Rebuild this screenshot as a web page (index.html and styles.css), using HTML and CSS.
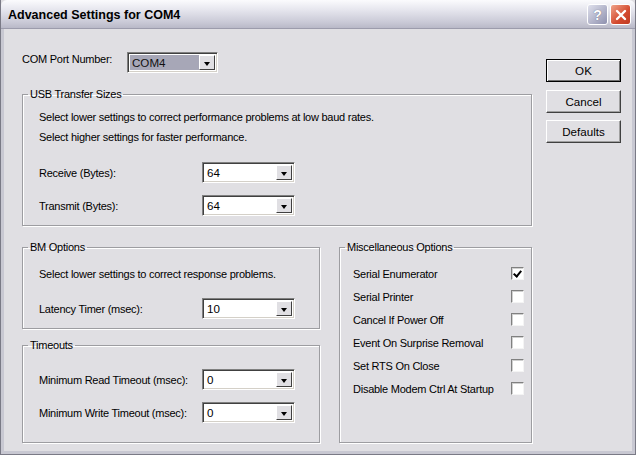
FILE: index.html
```html
<!DOCTYPE html>
<html lang="en">
<head>
  <meta charset="UTF-8" />
  <title>Advanced Settings for COM4</title>
  <link rel="stylesheet" href="styles.css">
</head>
<body>
  <div class="window">
    <div class="titlebar">
      <span class="title">Advanced Settings for COM4</span>
      <div class="caption-btns">
        <span class="cap-btn help">?</span>
        <span class="cap-btn close">
          <svg width="12" height="12" viewBox="0 0 12 12"><path d="M2 2 L10 10 M10 2 L2 10" stroke="#fff" stroke-width="2.4" stroke-linecap="round"/></svg>
        </span>
      </div>
    </div>

    <div class="client">
      <div class="main">
        <div class="port-row">
          <span class="port-label">COM Port Number:</span>
          <div class="combo port-combo">
            <span class="value selected">COM4</span>
            <span class="arrow"></span>
          </div>
        </div>

        <fieldset class="group usb">
          <legend>USB Transfer Sizes</legend>
          <p class="note">Select lower settings to correct performance problems at low baud rates.</p>
          <p class="note">Select higher settings for faster performance.</p>
          <div class="field first">
            <span>Receive (Bytes):</span>
            <div class="combo"><span class="value">64</span><span class="arrow"></span></div>
          </div>
          <div class="field">
            <span>Transmit (Bytes):</span>
            <div class="combo"><span class="value">64</span><span class="arrow"></span></div>
          </div>
        </fieldset>

        <div class="lower">
          <div class="left-col">
            <fieldset class="group bm">
              <legend>BM Options</legend>
              <p class="note">Select lower settings to correct response problems.</p>
              <div class="field first">
                <span>Latency Timer (msec):</span>
                <div class="combo"><span class="value">10</span><span class="arrow"></span></div>
              </div>
            </fieldset>

            <fieldset class="group timeouts">
              <legend>Timeouts</legend>
              <div class="field">
                <span>Minimum Read Timeout (msec):</span>
                <div class="combo"><span class="value">0</span><span class="arrow"></span></div>
              </div>
              <div class="field">
                <span>Minimum Write Timeout (msec):</span>
                <div class="combo"><span class="value">0</span><span class="arrow"></span></div>
              </div>
            </fieldset>
          </div>

          <fieldset class="group misc">
            <legend>Miscellaneous Options</legend>
            <div class="check-row"><span>Serial Enumerator</span><span class="check checked"></span></div>
            <div class="check-row"><span>Serial Printer</span><span class="check"></span></div>
            <div class="check-row"><span>Cancel If Power Off</span><span class="check"></span></div>
            <div class="check-row"><span>Event On Surprise Removal</span><span class="check"></span></div>
            <div class="check-row"><span>Set RTS On Close</span><span class="check"></span></div>
            <div class="check-row"><span>Disable Modem Ctrl At Startup</span><span class="check"></span></div>
          </fieldset>
        </div>
      </div>

      <div class="side">
        <button class="btn default">OK</button>
        <button class="btn">Cancel</button>
        <button class="btn">Defaults</button>
      </div>
    </div>
  </div>
</body>
</html>
```

FILE: styles.css
```css
:root {
  --face: #e0dfe3;
  --edge-dark: #9d9da1;
  --edge-light: #fff;
  --text: #000;
}

* {
  box-sizing: border-box;
}

body {
  margin: 0;
  font-family: "Liberation Sans", Arial, sans-serif;
  font-size: 11px;
  letter-spacing: -0.25px;
  color: var(--text);
  background: #fff;
}

.window {
  width: 636px;
  height: 455px;
  display: flex;
  flex-direction: column;
  background: var(--face);
  border: 1px solid #7a7a86;
  border-top: none;
}

.titlebar {
  height: 29px;
  flex: none;
  display: flex;
  align-items: center;
  justify-content: space-between;
  padding: 0 4px 0 7px;
  background: linear-gradient(#fbfbfd 0%, #e6e6ee 35%, #c9c9d6 80%, #b9b9c8 100%);
  border-bottom: 1px solid #9c9cac;
  border-radius: 6px 6px 0 0;
}

.title {
  font-family: "Liberation Sans", Arial, sans-serif;
  font-weight: bold;
  font-size: 12.5px;
  letter-spacing: 0;
  padding-top: 2px;
}

.caption-btns {
  display: flex;
  gap: 2px;
  padding-top: 1px;
}

.cap-btn {
  width: 21px;
  height: 21px;
  border-radius: 3px;
  display: flex;
  align-items: center;
  justify-content: center;
  border: 1px solid #fff;
}

.help {
  background: linear-gradient(135deg, #dfe0ec, #8e90ae);
  color: #fff;
  font-weight: bold;
  font-size: 14px;
  text-shadow: 0 0 1px #556;
}

.close {
  background: linear-gradient(135deg, #f0a58c, #d3492e 60%, #c03a22);
}

.client {
  flex: 1;
  display: flex;
  gap: 14px;
  padding: 0 10px 0 18px;
  border-left: 3px solid #c8c8d2;
  border-right: 3px solid #c8c8d2;
  border-bottom: 3px solid #c8c8d2;
  white-space: nowrap;
}

.main {
  width: 510px;
  flex: none;
}

.port-row {
  display: flex;
  align-items: center;
  margin-top: 23px;
  height: 21px;
}

.port-label {
  width: 105px;
  align-self: flex-start;
  margin-top: 1px;
}

.combo {
  width: 93px;
  height: 21px;
  display: flex;
  align-items: stretch;
  background: #fff;
  border-top: 1px solid #808080;
  border-left: 1px solid #808080;
  border-right: 1px solid #fff;
  border-bottom: 1px solid #fff;
  box-shadow: inset 1px 1px 0 #404040, inset -1px -1px 0 #d4d0c8;
  padding: 2px;
}

.port-combo {
  width: 91px;
}

.combo .value {
  flex: 1;
  padding-left: 2px;
  line-height: 15px;
  font-size: 11.6px;
  letter-spacing: 0;
}

.combo .value.selected {
  background: #a7a7b7;
  color: #111;
}

.combo .arrow {
  width: 16px;
  flex: none;
  background: var(--face);
  border-top: 1px solid #fff;
  border-left: 1px solid #fff;
  border-right: 1px solid #404040;
  border-bottom: 1px solid #404040;
  position: relative;
}

.combo .arrow::after {
  content: "";
  position: absolute;
  left: 4px;
  top: 6px;
  border-left: 3.5px solid transparent;
  border-right: 3.5px solid transparent;
  border-top: 4px solid #000;
}

.group {
  margin: 0;
  padding: 0 0 0 16px;
  border: 1px solid var(--edge-dark);
  box-shadow: inset 1px 1px 0 var(--edge-light), 1px 1px 0 var(--edge-light);
  min-width: 0;
}

.group legend {
  margin-left: -11px;
  padding: 0 2px;
  line-height: 14px;
}

.usb {
  margin-top: 14px;
  padding-top: 6px;
  padding-bottom: 9px;
}

.note {
  margin: 0;
  line-height: 20px;
}

.field {
  display: flex;
  align-items: center;
  margin-top: 12px;
}

.field > span {
  width: 163px;
}

.field.first {
  margin-top: 15px;
}

.lower {
  display: grid;
  grid-template-columns: 298px 193px;
  gap: 19px;
  margin-top: 14px;
}

.left-col {
  display: flex;
  flex-direction: column;
}

.bm {
  padding-top: 10px;
  padding-bottom: 9px;
}

.bm .field.first {
  margin-top: 14px;
}

.timeouts {
  margin-top: 9px;
  padding-top: 5px;
  padding-bottom: 19px;
}

.misc {
  padding: 8px 7px 0 13px;
}

.misc legend {
  margin-left: -8px;
}

.check-row {
  display: flex;
  align-items: center;
  justify-content: space-between;
  height: 23px;
}

.check {
  width: 13px;
  height: 13px;
  background: #fff;
  border-top: 1px solid #808080;
  border-left: 1px solid #808080;
  border-right: 1px solid #f4f4f4;
  border-bottom: 1px solid #f4f4f4;
  box-shadow: inset 1px 1px 0 #d0d0d0;
  position: relative;
}

.check.checked::after {
  content: "";
  position: absolute;
  left: 3px;
  top: 1px;
  width: 3px;
  height: 6px;
  border-right: 2px solid #000;
  border-bottom: 2px solid #000;
  transform: rotate(40deg);
}

.side {
  display: flex;
  flex-direction: column;
  padding-top: 30px;
  gap: 8px;
}

.btn {
  width: 75px;
  height: 23px;
  font-family: "Liberation Sans", Arial, sans-serif;
  font-size: 11.6px;
  color: #000;
  background: var(--face);
  border-top: 1px solid #fff;
  border-left: 1px solid #fff;
  border-right: 1px solid #404040;
  border-bottom: 1px solid #404040;
  box-shadow: inset -1px -1px 0 #a0a0a0;
  padding: 0;
}

.btn.default {
  border: 1px solid #000;
  box-shadow: inset 1px 1px 0 #fff, inset -1px -1px 0 #707070;
}

.btn + .btn + .btn {
  margin-top: -1px;
}
```
